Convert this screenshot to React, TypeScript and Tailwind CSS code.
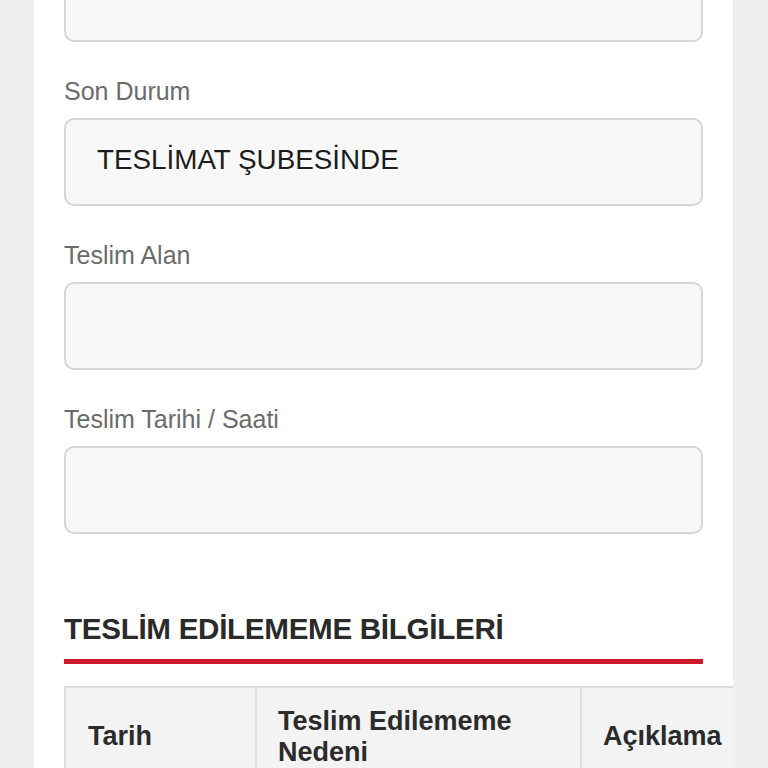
const fields = [
  { label: 'Son Durum', value: 'TESLİMAT ŞUBESİNDE' },
  { label: 'Teslim Alan', value: '' },
  { label: 'Teslim Tarihi / Saati', value: '' },
]

function FieldBox({ value }: { value: string }) {
  return (
    <div className="h-[88px] rounded-[10px] border-2 border-[#d6d6d6] bg-[#f8f8f8] flex items-center pl-[31px] pb-[5px] text-[27.8px] text-[#1c1c1c] leading-none">
      {value}
    </div>
  )
}

export default function App() {
  return (
    <div className="h-[768px] overflow-hidden bg-[#efefef] font-['Liberation_Sans',Arial,sans-serif]">
      <div className="ml-[34px] w-[699px] bg-white pl-[30px] h-full flex flex-col">
        <div className="-mt-[46px] w-[639px]">
          {/* previous field, scrolled out of view */}
          <FieldBox value="" />

          {fields.map((f) => (
            <div key={f.label}>
              <div className="h-[76px] flex items-end pb-[14px] text-[25px] text-[#6b6b6b] leading-none">
                {f.label}
              </div>
              <FieldBox value={f.value} />
            </div>
          ))}

          <div className="pt-[80px]">
            <h2 className="text-[29.6px] font-bold text-[#2a2a2a] leading-none tracking-[-0.3px]">
              TESLİM EDİLEMEME BİLGİLERİ
            </h2>
            <div className="mt-[15px] h-[5px] bg-[#cc1a2b]" />
          </div>
        </div>

        <div className="mt-[22px] w-[669px] overflow-hidden">
          <table className="w-[700px] border-collapse bg-[#f3f3f3] text-[27px] font-bold text-[#2b2b2b] leading-[31px]">
            <thead>
              <tr>
                <th className="w-[191px] border-2 border-[#dddddd] text-left align-middle pl-[22px] py-[18px]">Tarih</th>
                <th className="w-[325px] border-2 border-[#dddddd] text-left align-middle pl-[21px] py-[18px]">
                  Teslim Edilememe
                  <br />
                  Nedeni
                </th>
                <th className="border-2 border-[#dddddd] text-left align-middle pl-[21px] py-[18px]">Açıklama</th>
              </tr>
            </thead>
          </table>
        </div>
      </div>
    </div>
  )
}
